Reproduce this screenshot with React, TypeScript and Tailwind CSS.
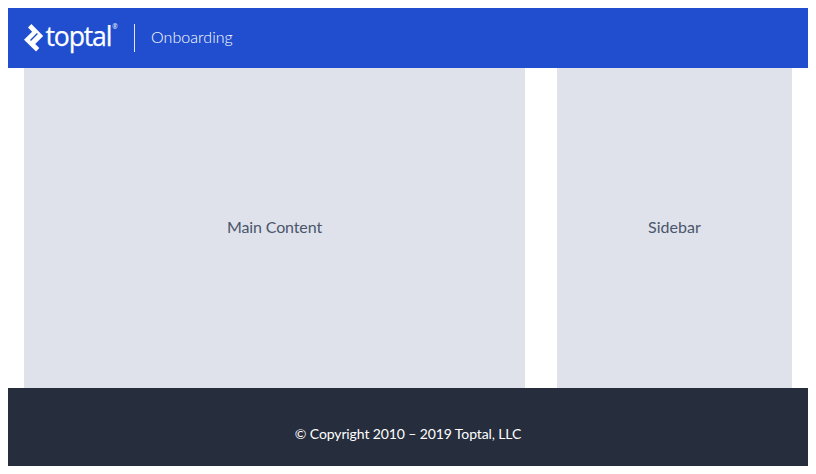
function ToptalLogo() {
  return (
    <svg width="94" height="28" viewBox="0 0 94 28" className="block overflow-visible" role="img" aria-label="Toptal">
      <path
        fill="#fff"
        fillRule="evenodd"
        d="M7.4 0 19.2 12 11.2 20 15.3 24.1 12.1 27.6 0 15.8 8.1 7.8 4 3.6ZM12.9 9.1 6 16 7 17 13.9 10.1Z"
      />
      <text x="21.5" y="22" fill="#fff" stroke="#fff" strokeWidth="0.25" fontSize="27.5" textLength="65.8" lengthAdjust="spacingAndGlyphs" className="font-['Open_Sans',sans-serif] tracking-[-1.2px]">
        toptal
      </text>
      <text x="88.3" y="5" fill="#fff" fontSize="6.5" textLength="5.4" lengthAdjust="spacingAndGlyphs" className="font-['Open_Sans',sans-serif]">
        ®
      </text>
    </svg>
  );
}

function Header() {
  return (
    <header className="flex h-[60px] items-center bg-[#204ecf] px-4">
      <ToptalLogo />
      <div className="ml-4 h-7 w-px bg-[#dfe6f8]" />
      <span className="ml-4 pb-0.5 text-base font-light leading-6 tracking-[0.05px] text-white">Onboarding</span>
    </header>
  );
}

export default function App() {
  return (
    <div className="h-[474px] bg-white p-2 font-['Lato',sans-serif]">
      <Header />
      <div className="flex h-80 gap-8 px-4 text-base text-[#4a566c]">
        <main className="flex w-[501px] items-center justify-center bg-[#dfe2ea]">
          <span className="pb-0.5 tracking-[-0.13px]">Main Content</span>
        </main>
        <aside className="flex flex-1 items-center justify-center bg-[#dfe2ea]">
          <span className="pb-0.5 tracking-[0.05px]">Sidebar</span>
        </aside>
      </div>
      <footer className="flex h-[78px] items-center justify-center bg-[#262d3d] pt-3.5 text-sm text-white">
        <span className="tracking-[-0.11px]">© Copyright 2010 – 2019 Toptal, LLC</span>
      </footer>
    </div>
  );
}
